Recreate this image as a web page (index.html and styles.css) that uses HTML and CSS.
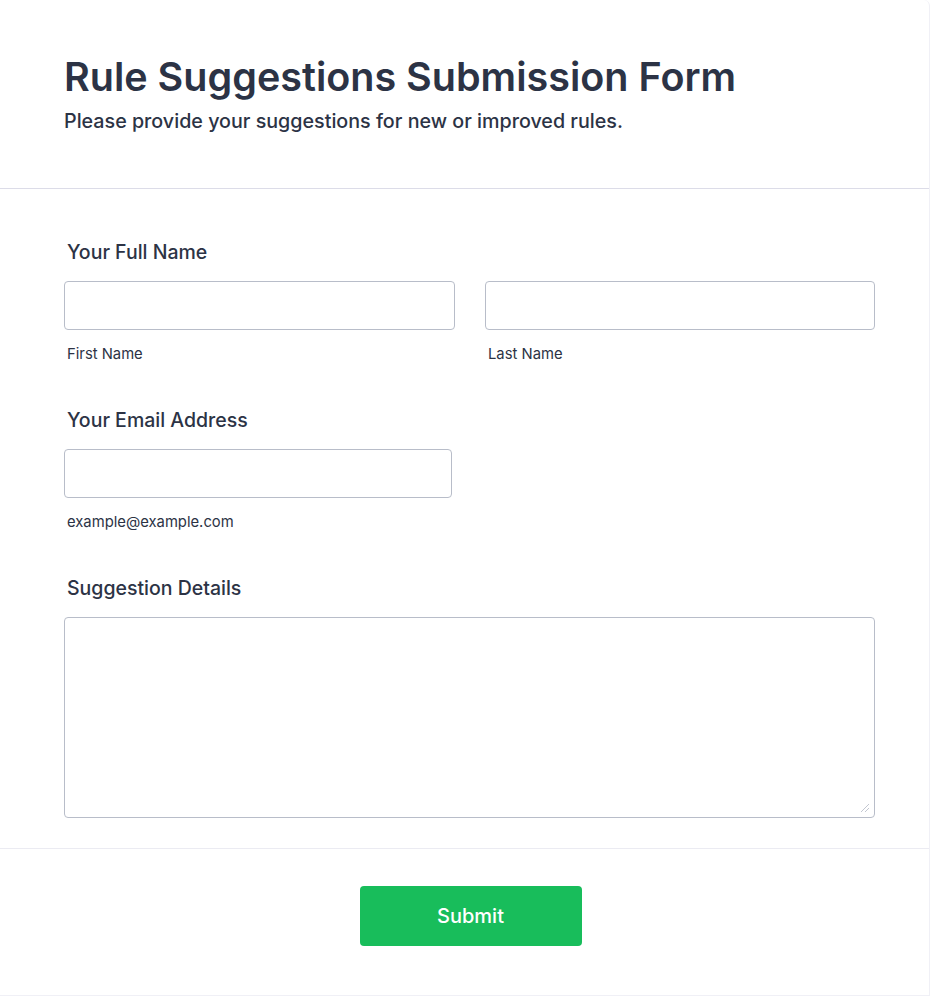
FILE: index.html
```html
<!DOCTYPE html>
<html lang="en">
<head>
<meta charset="utf-8">
<title>Rule Suggestions Submission Form</title>
<link rel="stylesheet" href="styles.css">
</head>
<body>
<form class="card">
  <header class="header">
    <h1 class="title">Rule Suggestions Submission Form</h1>
    <p class="subtitle">Please provide your suggestions for new or improved rules.</p>
  </header>
  <div class="body">
    <div class="field">
      <label class="label">Your Full Name</label>
      <div class="name-row">
        <div class="sub">
          <input class="input" type="text">
          <span class="sublabel">First Name</span>
        </div>
        <div class="sub">
          <input class="input" type="text">
          <span class="sublabel">Last Name</span>
        </div>
      </div>
    </div>
    <div class="field">
      <label class="label">Your Email Address</label>
      <div class="sub email">
        <input class="input" type="email">
        <span class="sublabel">example@example.com</span>
      </div>
    </div>
    <div class="field">
      <label class="label">Suggestion Details</label>
      <div class="textarea-wrap">
        <textarea class="textarea"></textarea>
        <svg class="grip" width="10" height="10" viewBox="0 0 10 10" aria-hidden="true">
          <line x1="9" y1="1" x2="1" y2="9" stroke="#c3c7d1" stroke-width="1"/>
          <line x1="9" y1="5" x2="5" y2="9" stroke="#c3c7d1" stroke-width="1"/>
        </svg>
      </div>
    </div>
  </div>
  <div class="footer">
    <button class="submit" type="button">Submit</button>
  </div>
</form>
</body>
</html>
```
FILE: styles.css
```css
* { box-sizing: border-box; }
html, body { margin: 0; padding: 0; background: #ffffff; }
body {
  font-family: Inter, "Noto Sans", sans-serif;
  color: #2c3345;
}
.card {
  width: 930px;
  height: 996px;
  background: #fff;
  border-right: 1px solid #f0f0f6;
  border-bottom: 1px solid #f0f0f6;
  border-top-right-radius: 6px;
  display: flex;
  flex-direction: column;
}
.header {
  padding: 53px 64px 0 64px;
  height: 189px;
  border-bottom: 1px solid #dcdce8;
}
.title {
  margin: 0;
  font-size: 39.5px;
  font-weight: 600;
  line-height: 48px;
}
.subtitle {
  margin: 8px 0 0 0;
  font-size: 19.7px;
  font-weight: 500;
  line-height: 24px;
}
.body {
  padding: 51px 54px 30px 64px;
  display: flex;
  flex-direction: column;
  gap: 45px;
  border-bottom: 1px solid #ebebf2;
}
.field { display: flex; flex-direction: column; }
.label {
  font-size: 19.5px;
  font-weight: 500;
  line-height: 24px;
  padding-left: 3px;
  margin-bottom: 17px;
}
.name-row {
  display: grid;
  grid-template-columns: 391px 390px;
  column-gap: 30px;
}
.sub { display: flex; flex-direction: column; }
.email { width: 388px; }
.input {
  height: 49px;
  width: 100%;
  border: 1px solid #b8bdc9;
  border-radius: 4px;
  background: #fff;
  font: inherit;
}
.sublabel {
  font-size: 14.8px;
  line-height: 18px;
  margin-top: 15px;
  padding-left: 3px;
  color: #2c3345;
}
.textarea-wrap {
  position: relative;
  width: 811px;
  height: 201px;
}
.textarea {
  display: block;
  height: 201px;
  width: 811px;
  border: 1px solid #b8bdc9;
  border-radius: 4px;
  background: #fff;
  font: inherit;
  resize: none;
}
.grip {
  position: absolute;
  right: 5px;
  bottom: 5px;
}
.footer {
  display: flex;
  justify-content: center;
  padding-top: 37px;
}
.submit {
  width: 222px;
  height: 60px;
  background: #18bd5b;
  color: #fff;
  border: none;
  border-radius: 4px;
  font-family: Inter, "Noto Sans", sans-serif;
  font-size: 20px;
  font-weight: 500;
  margin-left: 12px;
}
```
